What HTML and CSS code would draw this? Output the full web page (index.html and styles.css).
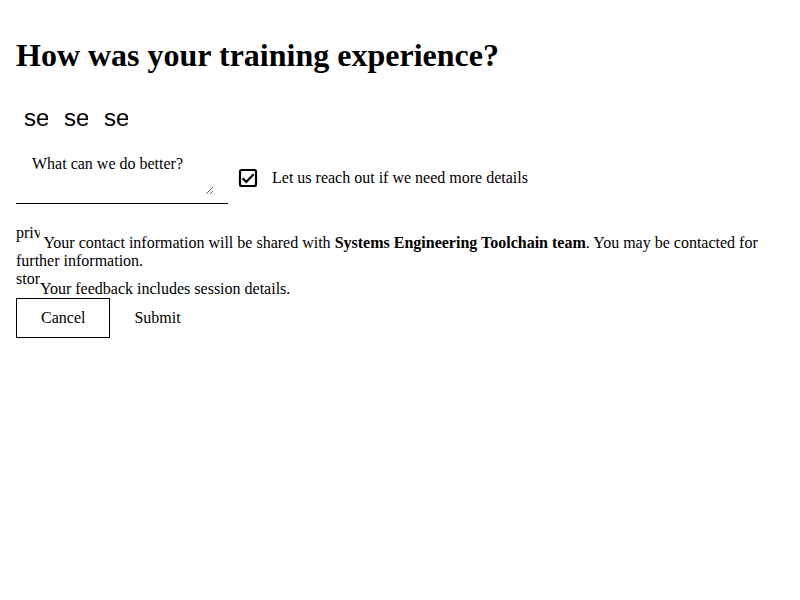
FILE: index.html
```html
<!DOCTYPE html>
<html lang="en">
<head>
<meta charset="utf-8">
<title>Feedback</title>
<link rel="stylesheet" href="styles.css">
</head>
<body>
<h1 class="title">How was your training experience?</h1>
<div class="rating">
  <button class="rate-btn" type="button"><span class="rate-icon">sentiment_dissatisfied</span></button>
  <button class="rate-btn" type="button"><span class="rate-icon">sentiment_neutral</span></button>
  <button class="rate-btn" type="button"><span class="rate-icon">sentiment_satisfied</span></button>
</div>
<div class="form-row">
  <div class="field">
    <textarea class="comment" placeholder="What can we do better?"></textarea>
  </div>
  <label class="check">
    <svg class="check-icon" width="24" height="24" viewBox="0 0 24 24"><rect x="4" y="4" width="16" height="16" rx="1.5" fill="none" stroke="#000" stroke-width="2.2"/><path d="M6.6 12.3l3.6 3.6 7.4-7.6" fill="none" stroke="#000" stroke-width="2.2"/></svg>
    <span class="check-text">Let us reach out if we need more details</span>
  </label>
</div>
<div class="note note-first"><span class="note-icon">privacy_tip</span> Your contact information will be shared with <b>Systems Engineering Toolchain team</b>. You may be contacted for further information.</div>
<div class="note"><span class="note-icon">storage</span>Your feedback includes session details.</div>
<div class="actions">
  <button class="btn btn-cancel" type="button">Cancel</button>
  <button class="btn btn-submit" type="button">Submit</button>
</div>
</body>
</html>
```

FILE: styles.css
```css
body {
  margin: 16px;
  font-family: "Liberation Serif", serif;
  font-size: 16px;
  color: #000;
  background: #fff;
}

.title {
  font-size: 32px;
  font-weight: bold;
  margin: 21.44px 0;
}

.rating {
  display: flex;
  padding: 0 0 8px;
}

.rate-btn {
  background: none;
  border: none;
  padding: 8px;
  margin: 0;
  display: block;
  cursor: pointer;
}

.rate-icon {
  display: block;
  width: 24px;
  height: 24px;
  overflow: hidden;
  white-space: nowrap;
  font-family: "Liberation Sans", sans-serif;
  font-size: 24px;
  line-height: normal;
  color: #000;
}

.form-row {
  display: flex;
  align-items: center;
}

.field {
  width: 184px;
  padding: 8px 14px 8px 14px;
  border-bottom: 1px solid #000;
}

.comment {
  display: block;
  width: 184px;
  height: 43px;
  box-sizing: border-box;
  padding: 3px 2px 1px;
  border: none;
  outline: none;
  background: transparent;
  font-family: "Liberation Serif", serif;
  font-size: 16px;
  color: #000;
}

.comment::placeholder {
  color: #000;
  opacity: 1;
}

.check {
  display: flex;
  align-items: center;
  gap: 12px;
  margin-left: 8px;
  margin-top: 8px;
}

.check-icon {
  display: block;
}

.note-first {
  margin-top: 20px;
}

.note-icon {
  display: inline-block;
  width: 24px;
  height: 24px;
  overflow: hidden;
  white-space: nowrap;
}

.actions {
  display: flex;
}

.btn {
  font-family: "Liberation Serif", serif;
  font-size: 16px;
  background: none;
  color: #000;
  padding: 10px 24px;
  line-height: normal;
  margin: 0;
}

.btn-cancel {
  border: 1px solid #000;
}

.btn-submit {
  border: none;
}
```
